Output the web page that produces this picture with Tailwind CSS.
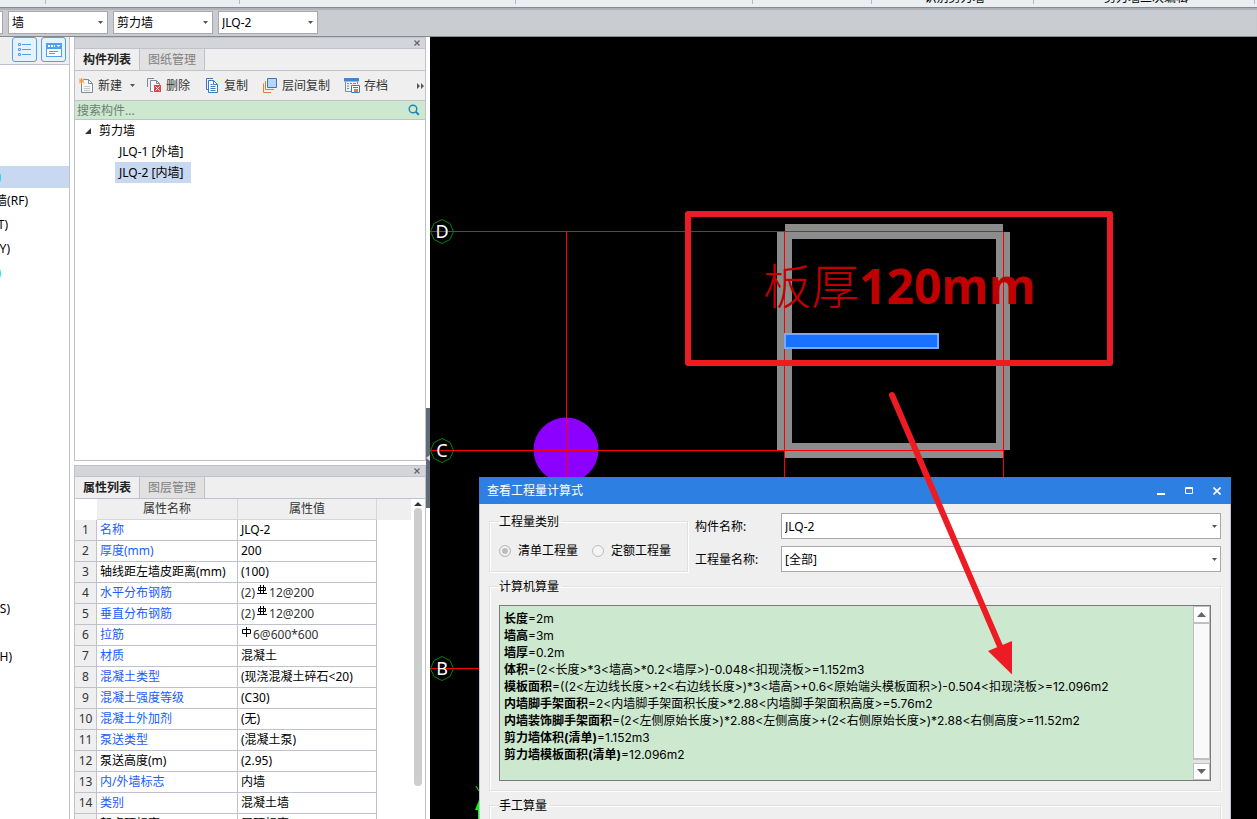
<!DOCTYPE html>
<html lang="zh-CN">
<head>
<meta charset="utf-8">
<title>查看工程量计算式</title>
<script src="https://cdn.jsdelivr.net/npm/@tailwindcss/browser@4"></script>
</head>
<body class="flex h-screen flex-col overflow-hidden bg-white font-['Noto_Sans','Noto_Sans_CJK_SC',sans-serif] text-xs text-black">

<!-- Ribbon edge -->
<div class="flex h-[7px] shrink-0 items-end overflow-hidden bg-[#eceff1] leading-4 whitespace-nowrap">
  <div class="h-1 w-[46px] shrink-0 self-start border-r border-[#b5b9be]"></div>
  <div class="h-1 w-[194px] shrink-0 self-start border-r border-[#b5b9be]"></div>
  <div class="h-1 w-[276px] shrink-0 self-start border-r border-[#b5b9be]"></div>
  <div class="h-1 w-[237px] shrink-0 self-start border-r border-[#b5b9be]"></div>
  <div class="h-1 w-[119px] shrink-0 self-start border-r border-[#b5b9be]"></div>
  <div class="w-[161px] shrink-0 pb-[1px] pl-1 text-center">识别剪力墙</div>
  <div class="h-1 w-px shrink-0 self-start bg-[#b5b9be]"></div>
  <div class="w-[220px] shrink-0 pb-[1px] pl-1 text-center">剪力墙二次编辑</div>
  <div class="h-1 w-px shrink-0 self-start bg-[#b5b9be]"></div>
</div>

<!-- Selection bar -->
<div class="flex h-[30px] shrink-0 items-center gap-[5px] border-y border-[#868a8f] bg-[#c9ccd1] shadow-[inset_0_2px_1px_#aeb2b8]">
  <div class="h-[23px] w-[3px] border-y border-r border-[#a8a8a8] bg-white"></div>
  <div class="relative w-[100px]">
    <select aria-label="构件大类" class="block h-[23px] w-full appearance-none border border-[#a8a8a8] bg-white pt-px pl-[3px]"><option>墙</option></select>
    <svg class="pointer-events-none absolute top-[10px] right-[5px]" width="5" height="3"><path d="M0 0h5L2.500 3z" fill="#555"/></svg>
  </div>
  <div class="relative w-[100px]">
    <select aria-label="构件类型" class="block h-[23px] w-full appearance-none border border-[#a8a8a8] bg-white pt-px pl-[3px]"><option>剪力墙</option></select>
    <svg class="pointer-events-none absolute top-[10px] right-[5px]" width="5" height="3"><path d="M0 0h5L2.500 3z" fill="#555"/></svg>
  </div>
  <div class="relative w-[100px]">
    <select aria-label="构件" class="block h-[23px] w-full appearance-none border border-[#a8a8a8] bg-white pt-px pl-[3px]"><option>JLQ-2</option></select>
    <svg class="pointer-events-none absolute top-[10px] right-[5px]" width="5" height="3"><path d="M0 0h5L2.500 3z" fill="#555"/></svg>
  </div>
</div>

<main class="flex min-h-0 flex-1">
  <!-- Navigation column -->
  <aside class="w-[70px] shrink-0 overflow-hidden border-r border-[#c0c2cb]">
    <div class="flex h-7 items-center justify-end gap-1 border-b border-[#c0c2cb] bg-[#efefef] pr-[3px] pb-[2px]">
      <button aria-label="列表视图" class="flex size-[25px] items-center justify-center rounded-[3px] border border-[#4da0f2] bg-[#e6f2fd]">
        <svg width="14" height="14" fill="none" stroke="#4da0f2"><path d="M.5.5h2v2h-2zM.5 5.500h2v2h-2zM.5 10.500h2v2h-2zM4 1.500h9M4 6.500h9M4 11.500h9"/></svg>
      </button>
      <button aria-label="面板视图" class="flex size-[25px] items-center justify-center rounded-[3px] border border-[#4da0f2] bg-[#e6f2fd]">
        <svg width="16" height="14"><path d="M0 0h16v14H0z" fill="#4da0f2"/><path d="M1 6h14v7H1z" fill="#fff"/><path d="M2 3h2M5 3h2M8 3h1" stroke="#fff" stroke-width="2"/><path d="M3 8.500h9M3 10.500h6" stroke="#4da0f2"/><path d="M10.500 2h4l-2 2z" fill="#fff"/></svg>
      </button>
    </div>
    <ul class="pt-[100px] whitespace-nowrap">
      <li class="flex h-6 items-center"><span class="flex h-[22px] w-full items-center bg-[#c8d8f0]"><span class="flex w-px justify-end overflow-hidden text-cyan-400">(Q)</span></span></li>
      <li class="flex h-6 w-[28px] items-center justify-end overflow-hidden">人防门框墙(RF)</li>
      <li class="flex h-6 w-[8px] items-center justify-end overflow-hidden">(T)</li>
      <li class="flex h-6 w-[10px] items-center justify-end overflow-hidden">(Y)</li>
      <li class="flex h-6 w-px items-center justify-end overflow-hidden text-cyan-400">(N)</li>
      <li class="h-[312px]"></li>
      <li class="flex h-6 w-[10px] items-center justify-end overflow-hidden">(S)</li>
      <li class="h-6"></li>
      <li class="flex h-6 w-[12px] items-center justify-end overflow-hidden">(H)</li>
    </ul>
  </aside>

  <div class="ml-1 flex w-[352px] shrink-0 flex-col">
    <!-- Component list -->
    <section class="flex h-[424px] shrink-0 flex-col border border-[#c0c2cb]">
      <div class="flex h-[11px] shrink-0 items-center justify-end border-b border-[#c0c2cb] bg-[#d3d5da] pr-[5px]">
        <button aria-label="关闭构件列表"><svg class="block" width="6" height="6" stroke="#666" stroke-width="1.300"><path d="M.5.5l5 5M5.500.5l-5 5"/></svg></button>
      </div>
      <div class="flex h-[22px] shrink-0 border-b border-[#c0c2cb] bg-[#efefef]">
        <button class="w-[65px] border-r border-[#c0c2cb] font-bold text-[#222]">构件列表</button>
        <button class="w-[65px] border-r border-[#c0c2cb] bg-[#e1e1e1] text-[#808080]">图纸管理</button>
      </div>
      <div class="flex h-[29px] shrink-0 items-center bg-[#efefef] pl-1 text-[#333]">
        <button class="flex w-[68px] items-center gap-1">
          <svg width="15" height="15" fill="none"><path d="M4.500 1.500h5l4 4v9h-11v-9" fill="#f7f7f7" stroke="#7d8a99"/><path d="M9.500 1.500v4h4" stroke="#7d8a99"/><path d="M5 8.500h6M5 10.500h6M5 12.500h6" stroke="#c3c8ce"/><path d="M0 .5l5 5M5 .5l-5 5M2.500 0v6M0 3h5" stroke="#f0952c"/></svg>
          新建
          <svg class="ml-1" width="5" height="3"><path d="M0 0h5L2.500 3z" fill="#555"/></svg>
        </button>
        <button class="flex w-[58px] items-center gap-1">
          <svg width="15" height="15" fill="none"><path d="M.5 9V.5H7" stroke="#7d8a99"/><path d="M6 13.500H3.500v-11h6l3 3V7" fill="#f7f7f7" stroke="#7d8a99"/><path d="M9.500 2.500v3h3" stroke="#7d8a99"/><path d="M7 7h7v7H7z" fill="#d04a4a"/><path d="M8.500 8.500l4 4M12.500 8.500l-4 4" stroke="#fff"/></svg>
          删除
        </button>
        <button class="flex w-[58px] items-center gap-[5px]">
          <svg width="14" height="15" fill="none" stroke="#3d78bd"><path d="M3 11.500H1.500V.5H8"/><path d="M3.500 2.500h5l4 4v8h-9z" fill="#fff"/><path d="M8.500 2.500v4h4M5.500 8.500h5M5.500 10.500h5M5.500 12.500h5M5.500 6.500h2"/></svg>
          复制
        </button>
        <button class="flex w-[81px] items-center gap-1">
          <svg width="15" height="15" fill="none"><path d="M4.500.5h9v9h-9z" fill="#b5d6ff" stroke="#3d78bd"/><path d="M2.500 3v8.500H11" stroke="#ec7a30"/><path d="M.5 5.500v9H8" stroke="#ec7a30"/></svg>
          层间复制
        </button>
        <button class="flex items-center gap-1">
          <svg width="16" height="15" fill="none"><path d="M1.500 4v9.500H7M13.500 4v2" stroke="#7d8a99"/><path d="M0 0h15v3.500H0z" fill="#3b86d8"/><path d="M3 5.500h2M6 5.500h2M9 5.500h3M3 8h2M3 10.500h2" stroke="#7d8a99"/><path d="M7.500 7.500h8v7h-8z" fill="#fff" stroke="#3b78bd"/><path d="M9 9.500h5" stroke="#3b78bd"/><path d="M10 11h4v3h-4z" fill="#ec7a30"/></svg>
          存档
        </button>
        <button aria-label="更多" class="ml-auto"><svg class="block" width="8" height="6" fill="#555"><path d="M0 0l3 3-3 3zM4 0l3 3-3 3z"/></svg></button>
      </div>
      <div class="flex h-[20px] shrink-0 items-center border-y border-[#c0c2cb] bg-[#cce8cf] pr-[5px]">
        <input type="text" aria-label="搜索构件" placeholder="搜索构件..." class="min-w-0 flex-1 bg-transparent pt-[2px] pl-[2px] outline-none placeholder:text-[#6f7f72]">
        <svg width="12" height="12" fill="none" stroke="#1f86b8" stroke-width="1.400"><circle cx="5" cy="5" r="3.800"/><path d="M7.800 7.800l3 3" stroke-width="2"/></svg>
      </div>
      <ul>
        <li class="flex h-[21px] items-center gap-2 pl-[10px]"><svg width="6" height="6"><path d="M6 0v6H0z" fill="#333"/></svg>剪力墙</li>
        <li class="flex h-[21px] items-center pl-10"><span class="px-1">JLQ-1 [外墙]</span></li>
        <li class="flex h-[21px] items-center pl-10"><span class="flex h-full min-w-[76px] items-center bg-[#c8d8f0] px-1">JLQ-2 [内墙]</span></li>
      </ul>
    </section>

    <!-- Properties -->
    <section class="mt-1 flex min-h-0 flex-1 flex-col border-x border-t border-[#c0c2cb]">
      <div class="flex h-[11px] shrink-0 items-center justify-end border-b border-[#c0c2cb] bg-[#d3d5da] pr-[5px]">
        <button aria-label="关闭属性列表"><svg class="block" width="6" height="6" stroke="#666" stroke-width="1.300"><path d="M.5.5l5 5M5.500.5l-5 5"/></svg></button>
      </div>
      <div class="flex h-[22px] shrink-0 border-b border-[#c0c2cb] bg-[#efefef]">
        <button class="w-[65px] border-r border-[#c0c2cb] font-bold text-[#222]">属性列表</button>
        <button class="w-[65px] border-r border-[#c0c2cb] bg-[#e1e1e1] text-[#808080]">图层管理</button>
      </div>
      <div class="flex min-h-0 flex-1 overflow-hidden">
        <div class="flex-1">
          <table class="w-full table-fixed border-separate border-spacing-0 leading-4 whitespace-nowrap [&_tbody_td]:border-r [&_tbody_td]:border-b [&_tbody_td]:border-[#c0c2cb] [&_tbody_td]:pl-[3px] [&_tbody_th]:border-r [&_tbody_th]:border-b [&_tbody_th]:border-[#c0c2cb] [&_tbody_th]:bg-[#efefef] [&_tbody_th]:font-normal [&_tbody_th]:text-[#333] [&_tr]:h-[21px]">
            <colgroup><col class="w-[22px]"><col class="w-[141px]"><col class="w-[139px]"><col></colgroup>
            <thead class="text-[#333]">
              <tr><th></th><th class="border-r border-b border-[#d5d5da] bg-[#efefef] font-normal">属性名称</th><th class="border-r border-b border-[#d5d5da] bg-[#efefef] font-normal">属性值</th><th class="bg-[#efefef]"></th></tr>
            </thead>
            <tbody>
              <tr><th>1</th><td class="text-[#1a5cff]">名称</td><td>JLQ-2</td></tr>
              <tr><th>2</th><td class="text-[#1a5cff]">厚度(mm)</td><td>200</td></tr>
              <tr><th>3</th><td>轴线距左墙皮距离(mm)</td><td>(100)</td></tr>
              <tr><th>4</th><td class="text-[#1a5cff]">水平分布钢筋</td><td class="text-[#333]">(2)<svg class="mx-[2px] mb-[6px] inline" width="10" height="10" fill="none" stroke="#000"><path d="M1.500 2.500h7v3h-7zM3.500 0v8M6.500 0v8M0 8.500h10"/></svg>12@200</td></tr>
              <tr><th>5</th><td class="text-[#1a5cff]">垂直分布钢筋</td><td class="text-[#333]">(2)<svg class="mx-[2px] mb-[6px] inline" width="10" height="10" fill="none" stroke="#000"><path d="M1.500 2.500h7v3h-7zM3.500 0v8M6.500 0v8M0 8.500h10"/></svg>12@200</td></tr>
              <tr><th>6</th><td class="text-[#1a5cff]">拉筋</td><td class="text-[#333]"><svg class="mr-px mb-[6px] ml-px inline" width="10" height="10" fill="none" stroke="#000"><path d="M.5 2.500h8v4h-8zM4.500 0v10"/></svg>6@600*600</td></tr>
              <tr><th>7</th><td class="text-[#1a5cff]">材质</td><td>混凝土</td></tr>
              <tr><th>8</th><td class="text-[#1a5cff]">混凝土类型</td><td>(现浇混凝土碎石&lt;20)</td></tr>
              <tr><th>9</th><td class="text-[#1a5cff]">混凝土强度等级</td><td>(C30)</td></tr>
              <tr><th>10</th><td class="text-[#1a5cff]">混凝土外加剂</td><td>(无)</td></tr>
              <tr><th>11</th><td class="text-[#1a5cff]">泵送类型</td><td>(混凝土泵)</td></tr>
              <tr><th>12</th><td>泵送高度(m)</td><td>(2.95)</td></tr>
              <tr><th>13</th><td class="text-[#1a5cff]">内/外墙标志</td><td>内墙</td></tr>
              <tr><th>14</th><td class="text-[#1a5cff]">类别</td><td>混凝土墙</td></tr>
              <tr><th>15</th><td>起点顶标高</td><td>层顶标高</td></tr>
            </tbody>
          </table>
        </div>
        <div class="flex w-[14px] shrink-0 flex-col items-center pt-[3px]">
          <svg width="8" height="4"><path d="M4 0l4 4H0z" fill="#333"/></svg>
          <div class="mt-[2px] h-[278px] w-2 rounded-full bg-[#cdcdcd]"></div>
        </div>
      </div>
    </section>
  </div>

  <!-- Splitter -->
  <div class="w-1 shrink-0 pt-[371px]"><div class="flex h-[100px] items-center bg-[#5e6b78]"><svg width="4" height="6"><path d="M4 0v6L0 3z" fill="#d5dae0"/></svg></div></div>

  <!-- Drawing canvas -->
  <div class="relative min-w-0 flex-1 overflow-hidden bg-black">
    <svg class="absolute top-0 left-0 max-w-none" width="827" height="782" viewBox="430 37 827 782">
      <g fill="#8c8c8c">
        <path d="M785 224h218v15H785zM785 443h218v15H785zM777 232h15v218h-15zM996 232h14v218h-14z"/>
      </g>
      <circle cx="566" cy="450" r="32.500" fill="#8c00ff"/>
      <path d="M430 231.500h573M430 450.500h574M430 668.500h60M566.500 232v260M784.500 232v260M1003.500 232v260" stroke="#f00" fill="none"/>
      <g fill="none" stroke="#0a800a">
        <path d="M442 219.500l8 4 3.500 8-3.500 8-8 4-8-4-3.500-8 3.500-8z"/>
        <path d="M442 438.500l8 4 3.500 8-3.500 8-8 4-8-4-3.500-8 3.500-8z"/>
        <path d="M442 656.500l8 4 3.500 8-3.500 8-8 4-8-4-3.500-8 3.500-8z"/>
      </g>
      <path d="M476 786l3 5" fill="none" stroke="#0f0"/>
      <path d="M475 810l4-10v19h-1v-9z" fill="#0f0"/>
      <g fill="#fff" text-anchor="middle" class="font-['Noto_Sans',sans-serif] text-[18px]">
        <text x="442" y="238">D</text><text x="442" y="457">C</text><text x="442" y="675">B</text>
      </g>
      <path d="M785 334h153v14H785z" fill="#1a70ff" stroke="#77a9ff" stroke-width="2"/>
      <text x="763" y="304" fill="#c00000" class="font-['Open_Sans','Noto_Sans_CJK_SC',sans-serif] text-5xl"><tspan class="font-light">板厚</tspan><tspan class="font-bold">120mm</tspan></text>
      <path d="M688 214h422v149H688z" fill="none" stroke="#ed1c24" stroke-width="6" stroke-linejoin="round"/>
    </svg>

    <!-- Calculation dialog -->
    <section class="absolute top-[440px] left-[49px] w-[752px] bg-[#efefef]">
      <header class="flex h-[27px] items-center bg-[#2d80e2] px-2 text-white">
        <h1 class="flex-1">查看工程量计算式</h1>
        <div class="flex items-center gap-5 pr-[2px]">
          <button aria-label="最小化"><svg class="block" width="8" height="8"><path d="M0 6h8v2H0z" fill="#fff"/></svg></button>
          <button aria-label="最大化"><svg class="block" width="8" height="8" fill="none" stroke="#fff"><path d="M.5.5h7v6h-7zM0 1.500h8"/></svg></button>
          <button aria-label="关闭"><svg class="block" width="8" height="8" stroke="#fff" stroke-width="1.600"><path d="M.5.5l7 7M7.500.5l-7 7"/></svg></button>
        </div>
      </header>
      <div class="flex flex-col gap-[6px] border-x border-[#bcc4d0] px-[9px] pt-[9px] pb-4">
        <div class="flex gap-[7px]">
          <fieldset class="w-[199px] shrink-0 border border-[#e0e0e0] px-[9px] shadow-[inset_1px_1px_0_#fff,1px_1px_0_#fff]">
            <legend class="pr-[3px] leading-[17px]">工程量类别</legend>
            <div class="flex h-[41px] items-center gap-[14px] pt-px">
              <label class="flex items-center gap-[7px]"><input type="radio" name="kind" checked disabled class="size-3 appearance-none rounded-full border border-[#bdbdbd] bg-[#f4f4f4] checked:bg-[#bdbdbd] checked:shadow-[inset_0_0_0_2px_#f4f4f4]">清单工程量</label>
              <label class="flex items-center gap-[7px]"><input type="radio" name="kind" disabled class="size-3 appearance-none rounded-full border border-[#bdbdbd] bg-[#f4f4f4]">定额工程量</label>
            </div>
          </fieldset>
          <div class="grid flex-1 grid-cols-[86px_1fr] items-center gap-y-[6px]">
            <label for="component" class="pt-[2px]">构件名称:</label>
            <div class="relative">
              <select id="component" class="block h-[26px] w-full appearance-none border border-[#a8a8a8] bg-white pt-[2px] pl-[3px]"><option>JLQ-2</option></select>
              <svg class="pointer-events-none absolute top-3 right-1" width="5" height="3"><path d="M0 0h5L2.500 3z" fill="#555"/></svg>
            </div>
            <label for="quantity" class="pt-[2px]">工程量名称:</label>
            <div class="relative">
              <select id="quantity" class="block h-[26px] w-full appearance-none border border-[#a8a8a8] bg-white pt-[2px] pl-[3px]"><option>[全部]</option></select>
              <svg class="pointer-events-none absolute top-3 right-1" width="5" height="3"><path d="M0 0h5L2.500 3z" fill="#555"/></svg>
            </div>
          </div>
        </div>
        <fieldset class="border border-[#e0e0e0] px-[9px] pb-[9px] shadow-[inset_1px_1px_0_#fff,1px_1px_0_#fff]">
          <legend class="pr-[3px] leading-[17px]">计算机算量</legend>
          <div class="mt-[10px] flex h-[176px] border border-[#7a7a7a] bg-[#cce8cf]">
            <div class="flex-1 pt-1 pl-1 font-['Inter','Noto_Sans_CJK_SC',sans-serif] leading-[17px] whitespace-nowrap">
              <p><b>长度</b>=2m</p>
              <p><b>墙高</b>=3m</p>
              <p><b>墙厚</b>=0.2m</p>
              <p><b>体积</b>=(2&lt;长度&gt;*3&lt;墙高&gt;*0.2&lt;墙厚&gt;)-0.048&lt;扣现浇板&gt;=1.152m3</p>
              <p><b>模板面积</b>=((2&lt;左边线长度&gt;+2&lt;右边线长度&gt;)*3&lt;墙高&gt;+0.6&lt;原始端头模板面积&gt;)-0.504&lt;扣现浇板&gt;=12.096m2</p>
              <p><b>内墙脚手架面积</b>=2&lt;内墙脚手架面积长度&gt;*2.88&lt;内墙脚手架面积高度&gt;=5.76m2</p>
              <p><b>内墙装饰脚手架面积</b>=(2&lt;左侧原始长度&gt;)*2.88&lt;左侧高度&gt;+(2&lt;右侧原始长度&gt;)*2.88&lt;右侧高度&gt;=11.52m2</p>
              <p><b>剪力墙体积(清单)</b>=1.152m3</p>
              <p><b>剪力墙模板面积(清单)</b>=12.096m2</p>
            </div>
            <div class="flex w-[17px] shrink-0 flex-col bg-[#e4e4e4]">
              <button aria-label="向上滚动" class="flex h-[17px] items-center justify-center border border-[#c0c0c0] bg-white"><svg width="9" height="5"><path d="M4.500 0L9 5H0z" fill="#666"/></svg></button>
              <div class="mb-[3px] flex-1 border border-b-2 border-[#c0c0c0] bg-[#f9f9f9]"></div>
              <button aria-label="向下滚动" class="flex h-[17px] items-center justify-center border border-[#c0c0c0] bg-white"><svg width="9" height="5"><path d="M0 0h9L4.500 5z" fill="#666"/></svg></button>
            </div>
          </div>
        </fieldset>
        <fieldset class="h-20 border border-[#e0e0e0] px-[9px] shadow-[inset_1px_1px_0_#fff,1px_1px_0_#fff]">
          <legend class="pr-[3px] leading-[17px]">手工算量</legend>
        </fieldset>
      </div>
    </section>

    <!-- Annotation arrow -->
    <svg class="pointer-events-none absolute top-0 left-0 max-w-none" width="827" height="782" viewBox="430 37 827 782">
      <path d="M892 395l110 256" stroke="#ed1c24" stroke-width="6" stroke-linecap="round"/>
      <path d="M1012 641v33.500L988 651z" fill="#ed1c24"/>
    </svg>
  </div>
</main>
</body>
</html>
